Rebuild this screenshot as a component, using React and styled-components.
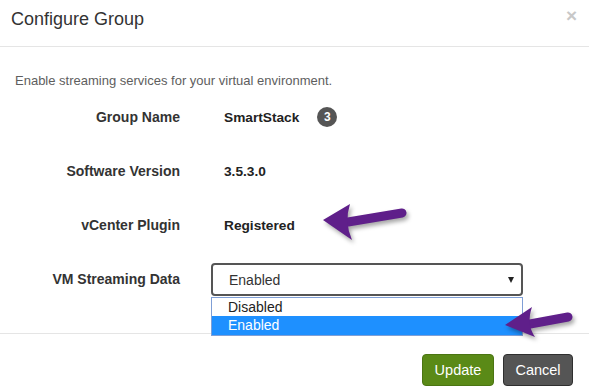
import React from "react";
import styled, { createGlobalStyle } from "styled-components";

const GlobalStyle = createGlobalStyle`
  html, body {
    margin: 0;
    padding: 0;
    background: #fff;
  }
  body {
    font-family: "Liberation Sans", Arial, sans-serif;
    color: #333;
  }
`;

const Modal = styled.div`
  position: relative;
  width: 589px;
  height: 387px;
  overflow: hidden;
  background: #fff;
`;

const Header = styled.div`
  display: flex;
  justify-content: space-between;
  align-items: flex-start;
  height: 47px;
  box-sizing: border-box;
  padding: 9px 12px 0 11px;
  border-bottom: 1px solid #e5e5e5;
`;

const Title = styled.h4`
  margin: 0;
  font-size: 18px;
  line-height: 20px;
  font-weight: normal;
  color: #333;
`;

const Close = styled.span`
  font-size: 19px;
  font-weight: bold;
  line-height: 14px;
  color: #c8c8c8;
`;

const Body = styled.div`
  padding: 25px 15px 27px;
`;

const Intro = styled.p`
  margin: 0;
  font-size: 13px;
  line-height: 18px;
  color: #5e5e5e;
`;

const Row = styled.div`
  display: grid;
  grid-template-columns: 165px 312px;
  column-gap: 31px;
  align-items: center;
  height: 54px;
`;

const Label = styled.div`
  text-align: right;
  font-size: 14px;
  font-weight: bold;
  color: #333;
`;

const Value = styled.div`
  display: flex;
  align-items: center;
  gap: 18px;
  padding-left: 13px;
  font-size: 13.7px;
  font-weight: bold;
  color: #222;
`;

const Badge = styled.span`
  display: inline-flex;
  align-items: center;
  justify-content: center;
  width: 20px;
  height: 20px;
  border-radius: 50%;
  background: #555;
  color: #fff;
  font-size: 12px;
  font-weight: bold;
`;

const SelectWrap = styled.div`
  position: relative;
  z-index: 2;
`;

const SelectBox = styled.div`
  display: flex;
  align-items: center;
  justify-content: space-between;
  height: 33px;
  box-sizing: border-box;
  padding: 2px 7px 0 16px;
  border: 2px solid #555;
  border-radius: 4px;
  font-size: 14px;
  color: #333;
  background: #fff;
`;

const Caret = styled.span`
  width: 0;
  height: 0;
  border-left: 3.5px solid transparent;
  border-right: 3.5px solid transparent;
  border-top: 6px solid #222;
`;

const OptionList = styled.div`
  position: absolute;
  top: 34px;
  left: 0;
  right: 0;
  border: 1px solid #7f9fd6;
  background: #fff;
`;

const Option = styled.div`
  height: 18.5px;
  line-height: 18px;
  padding-left: 16px;
  font-size: 14px;
  color: ${(p) => (p.$selected ? "#fff" : "#222")};
  background: ${(p) => (p.$selected ? "#1e90ff" : "#fff")};
`;

const Footer = styled.div`
  display: flex;
  justify-content: flex-end;
  gap: 9px;
  padding: 20px 16px 0;
  border-top: 1px solid #e5e5e5;
`;

const Button = styled.button`
  height: 32px;
  width: ${(p) => p.$width}px;
  padding: 0;
  border-radius: 4px;
  border: 1px solid ${(p) => (p.$primary ? "#4b7512" : "#2f2f2f")};
  background: ${(p) => (p.$primary ? "#5a8a17" : "#555")};
  color: #fff;
  font-family: "Liberation Sans", Arial, sans-serif;
  font-size: 14.5px;
`;

const ArrowSvg = styled.svg`
  position: absolute;
  left: ${(p) => p.$x}px;
  top: ${(p) => p.$y}px;
  z-index: 5;
  overflow: visible;
  filter: drop-shadow(2px 3px 2px rgba(0, 0, 0, 0.35));
`;

const Arrow = ({ x, y, w, h, tip, top, bottom, from, to }) => (
  <ArrowSvg $x={x} $y={y} width={w} height={h} viewBox={`0 0 ${w} ${h}`}>
    <line
      x1={from[0]}
      y1={from[1]}
      x2={to[0]}
      y2={to[1]}
      stroke="#5f1f8a"
      strokeWidth="9"
      strokeLinecap="round"
    />
    <path
      d={`M${tip[0]},${tip[1]} L${top[0]},${top[1]} Q${from[0] - 4},${from[1]} ${bottom[0]},${bottom[1]} Z`}
      fill="#5f1f8a"
    />
  </ArrowSvg>
);

const rows = [
  { label: "Group Name", value: "SmartStack", badge: 3 },
  { label: "Software Version", value: "3.5.3.0" },
  { label: "vCenter Plugin", value: "Registered" },
];

export default function App() {
  return (
    <>
      <GlobalStyle />
      <Modal>
        <Header>
          <Title>Configure Group</Title>
          <Close>×</Close>
        </Header>
        <Body>
          <Intro>Enable streaming services for your virtual environment.</Intro>
          {rows.map((r) => (
            <Row key={r.label}>
              <Label>{r.label}</Label>
              <Value>
                {r.value}
                {r.badge && <Badge>{r.badge}</Badge>}
              </Value>
            </Row>
          ))}
          <Row>
            <Label>VM Streaming Data</Label>
            <SelectWrap>
              <SelectBox>
                Enabled
                <Caret />
              </SelectBox>
              <OptionList>
                <Option>Disabled</Option>
                <Option $selected>Enabled</Option>
              </OptionList>
            </SelectWrap>
          </Row>
        </Body>
        <Footer>
          <Button $primary $width={72}>Update</Button>
          <Button $width={70}>Cancel</Button>
        </Footer>
        <Arrow
          x={318}
          y={198}
          w={92}
          h={48}
          tip={[5, 22]}
          top={[32, 6]}
          bottom={[34, 42]}
          from={[30, 24]}
          to={[84, 15]}
        />
        <Arrow
          x={500}
          y={302}
          w={75}
          h={40}
          tip={[5, 23]}
          top={[32, 5]}
          bottom={[35, 35]}
          from={[30, 22]}
          to={[68, 15]}
        />
      </Modal>
    </>
  );
}
